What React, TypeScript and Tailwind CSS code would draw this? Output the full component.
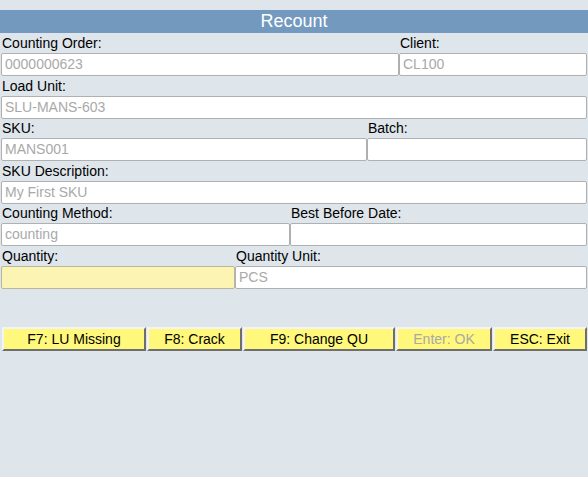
import React from 'react';

const Field = ({ label, value, className = '', yellow = false }: { label: string; value?: string; className?: string; yellow?: boolean }) => (
  <div className={`flex flex-col ${className}`}>
    <div className="h-[20px] pl-[1px] pt-[2px] text-[14px] leading-[17px] text-black">{label}</div>
    <div
      className={`h-[23px] border rounded-[2px] pl-[3px] text-[14px] leading-[21px] text-[#a9a9a9] ${
        yellow ? 'bg-[#fbf4b3] border-[#b9b6a0]' : 'bg-white border-[#b0b0b0]'
      }`}
    >
      {value}
    </div>
  </div>
);

const Btn = ({ children, className = '', disabled = false }: { children: React.ReactNode; className?: string; disabled?: boolean }) => (
  <div
    className={`h-[24px] flex items-center justify-center bg-[#fff87a] border-t-2 border-l-2 border-t-[#f4f4f4] border-l-[#f4f4f4] border-b-2 border-r-2 border-b-[#6e6e6e] border-r-[#6e6e6e] text-[14px] ${
      disabled ? 'text-[#a8a8a8]' : 'text-black'
    } ${className}`}
  >
    {children}
  </div>
);

const App = () => {
  return (
    <div className="min-h-screen w-[588px] bg-[#dee5eb] pt-[10px] font-['Liberation_Sans',Arial,sans-serif]">
      <div className="h-[23px] bg-[#7399bf] text-white text-[18px] leading-[23px] text-center">Recount</div>
      <div className="pl-[1px] pr-[1px]">
        <div className="flex">
          <Field label="Counting Order:" value="0000000623" className="w-[398px]" />
          <Field label="Client:" value="CL100" className="flex-1" />
        </div>
        <div className="flex">
          <Field label="Load Unit:" value="SLU-MANS-603" className="flex-1" />
        </div>
        <div className="flex -mt-[1px]">
          <Field label="SKU:" value="MANS001" className="w-[366px]" />
          <Field label="Batch:" className="flex-1" />
        </div>
        <div className="flex">
          <Field label="SKU Description:" value="My First SKU" className="flex-1" />
        </div>
        <div className="flex -mt-[1px]">
          <Field label="Counting Method:" value="counting" className="w-[289px]" />
          <Field label="Best Before Date:" className="flex-1" />
        </div>
        <div className="flex">
          <Field label="Quantity:" className="w-[234px]" yellow />
          <Field label="Quantity Unit:" value="PCS" className="flex-1" />
        </div>
      </div>
      <div className="flex gap-[1px] pl-[2px] pr-[1px] mt-[38px]">
        <Btn className="w-[144px]">F7: LU Missing</Btn>
        <Btn className="w-[95px]">F8: Crack</Btn>
        <Btn className="w-[152px]">F9: Change QU</Btn>
        <Btn className="w-[96px]" disabled>Enter: OK</Btn>
        <Btn className="flex-1">ESC: Exit</Btn>
      </div>
    </div>
  );
};

export default App;
